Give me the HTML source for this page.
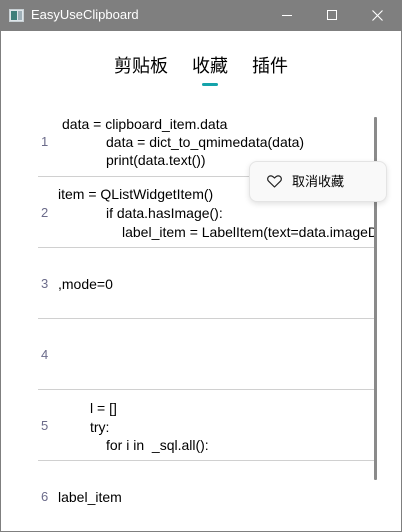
<!DOCTYPE html>
<html><head><meta charset="utf-8"><style>
*{margin:0;padding:0;box-sizing:border-box}
body{width:402px;height:532px;overflow:hidden;background:#fff;font-family:"Liberation Sans","Noto Sans CJK SC",sans-serif;position:relative}
.win{position:absolute;left:0;top:0;width:402px;height:532px;border:1px solid #7f7f7f;border-top:none}
.title{position:absolute;left:0;top:0;width:402px;height:31px;background:#7f7f7f;color:#fff;font-size:13px}
.clip{position:absolute;left:0;top:0;width:375px;height:532px;overflow:hidden}
.t{position:absolute;font-size:14px;color:#000;white-space:nowrap;line-height:16px}
.n{position:absolute;font-size:13px;color:#6b6b8a;line-height:16px}
.sep{position:absolute;left:38px;width:337px;height:1px;background:#d0d0d0}
.tab{position:absolute;top:55px;font-size:18px;color:#000;line-height:22px}
</style></head><body>
<div class="win"></div>
<div class="title">
  <svg style="position:absolute;left:9px;top:9px" width="15" height="13" viewBox="0 0 15 13"><rect x="0.5" y="0.5" width="14" height="12" fill="#dfe6ea" stroke="#c8d0d4"/><rect x="2" y="2" width="6" height="9" fill="#3f7f7a"/><rect x="9" y="2" width="4" height="9" fill="#9fb0b8"/></svg>
  <div style="position:absolute;left:31px;top:7px;line-height:16px">EasyUseClipboard</div>
  <div style="position:absolute;left:282px;top:15px;width:10px;height:1px;background:#fff"></div>
  <div style="position:absolute;left:327px;top:10px;width:10px;height:10px;border:1px solid #fff"></div>
  <svg style="position:absolute;left:372px;top:10px" width="11" height="11" viewBox="0 0 11 11"><path d="M0.5 0.5L10.5 10.5M10.5 0.5L0.5 10.5" stroke="#fff" stroke-width="1.1"/></svg>
</div>
<div class="tab" style="left:114px">剪贴板</div>
<div class="tab" style="left:192px">收藏</div>
<div class="tab" style="left:252px">插件</div>
<div style="position:absolute;left:202px;top:83px;width:16px;height:3px;border-radius:2px;background:#14a3aa"></div>

<div class="clip">
<div class="n" style="left:41px;top:134px">1</div>
<div class="t" style="left:62px;top:116px">data = clipboard_item.data</div>
<div class="t" style="left:106px;top:134px">data = dict_to_qmimedata(data)</div>
<div class="t" style="left:106px;top:152px">print(data.text())</div>
<div class="sep" style="top:176px"></div>

<div class="n" style="left:41px;top:205px">2</div>
<div class="t" style="left:58px;top:186px">item = QListWidgetItem()</div>
<div class="t" style="left:106px;top:205px">if data.hasImage():</div>
<div class="t" style="left:122px;top:224px">label_item = LabelItem(text=data.imageData</div>
<div class="sep" style="top:247px"></div>

<div class="n" style="left:41px;top:276px">3</div>
<div class="t" style="left:58px;top:276px">,mode=0</div>
<div class="sep" style="top:318px"></div>

<div class="n" style="left:41px;top:347px">4</div>
<div class="sep" style="top:389px"></div>

<div class="n" style="left:41px;top:418px">5</div>
<div class="t" style="left:90px;top:400px">l = []</div>
<div class="t" style="left:90px;top:419px">try:</div>
<div class="t" style="left:106px;top:437px">for i in &nbsp;_sql.all():</div>
<div class="sep" style="top:460px"></div>

<div class="n" style="left:41px;top:489px">6</div>
<div class="t" style="left:58px;top:489px">label_item</div>
</div>

<div style="position:absolute;left:374px;top:117px;width:3px;height:363px;background:#8a8a8a;border-radius:1px"></div>

<div style="position:absolute;left:249px;top:161px;width:138px;height:41px;background:#f9f9f9;border:1px solid #e4e4e4;border-radius:8px;box-shadow:0 2px 6px rgba(0,0,0,0.12)">
  <svg style="position:absolute;left:17px;top:13px" width="15" height="13" viewBox="0 0 15 13"><path d="M7.5 12L1.6 6.2C0.2 4.8 0.4 2.4 2 1.4C3.6 0.4 5.6 0.9 7.5 3C9.4 0.9 11.4 0.4 13 1.4C14.6 2.4 14.8 4.8 13.4 6.2Z" fill="none" stroke="#222" stroke-width="1.2" stroke-linejoin="round"/></svg>
  <div style="position:absolute;left:42px;top:12px;font-size:13px;line-height:16px;color:#000">取消收藏</div>
</div>
</body></html>
